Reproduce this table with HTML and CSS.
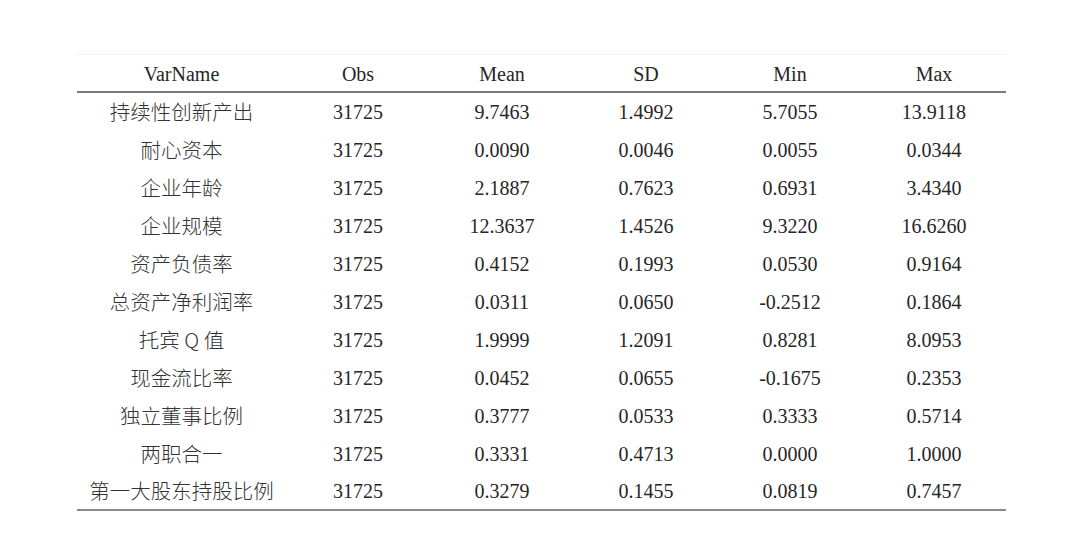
FILE: index.html
```html
<!DOCTYPE html>
<html>
<head>
<meta charset="utf-8">
<link rel="stylesheet" href="styles.css">
</head>
<body>
<div class="page">
  <table class="stats">
    <thead>
      <tr><th class="c1">VarName</th><th>Obs</th><th>Mean</th><th>SD</th><th>Min</th><th>Max</th></tr>
    </thead>
    <tbody>
      <tr><td class="c1">持续性创新产出</td><td>31725</td><td>9.7463</td><td>1.4992</td><td>5.7055</td><td>13.9118</td></tr>
      <tr><td class="c1">耐心资本</td><td>31725</td><td>0.0090</td><td>0.0046</td><td>0.0055</td><td>0.0344</td></tr>
      <tr><td class="c1">企业年龄</td><td>31725</td><td>2.1887</td><td>0.7623</td><td>0.6931</td><td>3.4340</td></tr>
      <tr><td class="c1">企业规模</td><td>31725</td><td>12.3637</td><td>1.4526</td><td>9.3220</td><td>16.6260</td></tr>
      <tr><td class="c1">资产负债率</td><td>31725</td><td>0.4152</td><td>0.1993</td><td>0.0530</td><td>0.9164</td></tr>
      <tr><td class="c1">总资产净利润率</td><td>31725</td><td>0.0311</td><td>0.0650</td><td>-0.2512</td><td>0.1864</td></tr>
      <tr><td class="c1">托宾 Q 值</td><td>31725</td><td>1.9999</td><td>1.2091</td><td>0.8281</td><td>8.0953</td></tr>
      <tr><td class="c1">现金流比率</td><td>31725</td><td>0.0452</td><td>0.0655</td><td>-0.1675</td><td>0.2353</td></tr>
      <tr><td class="c1">独立董事比例</td><td>31725</td><td>0.3777</td><td>0.0533</td><td>0.3333</td><td>0.5714</td></tr>
      <tr><td class="c1">两职合一</td><td>31725</td><td>0.3331</td><td>0.4713</td><td>0.0000</td><td>1.0000</td></tr>
      <tr><td class="c1">第一大股东持股比例</td><td>31725</td><td>0.3279</td><td>0.1455</td><td>0.0819</td><td>0.7457</td></tr>
    </tbody>
  </table>
</div>
</body>
</html>
```

FILE: styles.css
```css
html, body {
  margin: 0;
  padding: 0;
  background: #ffffff;
}
.page {
  padding: 54px 0 0 77px;
}
.stats {
  border-collapse: collapse;
  width: 929px;
  table-layout: fixed;
  font-family: "Liberation Serif", "Noto Sans CJK SC", serif;
  font-size: 20px;
  line-height: 22px;
  color: #262626;
  border-top: 1px solid #f0f0f0;
  border-bottom: 2px solid #8a8a8a;
}
.stats th, .stats td {
  width: 144px;
  text-align: center;
  padding: 0;
  font-weight: normal;
  white-space: nowrap;
}
.stats .c1 {
  width: 209px;
}
.stats thead th {
  height: 35px;
  padding-top: 1px;
  border-bottom: 2px solid #7a7a7a;
}
.stats tbody td {
  height: 37px;
  padding-bottom: 1px;
}
.stats tbody td.c1 {
  font-family: "Noto Sans CJK SC", sans-serif;
  font-weight: 300;
  font-size: 20.5px;
  line-height: 22px;
  color: #333;
  height: 35px;
  padding-bottom: 3px;
}
.stats tbody tr:last-child td {
  height: 35px;
}
.stats tbody tr:last-child td.c1 {
  height: 33px;
}
```
